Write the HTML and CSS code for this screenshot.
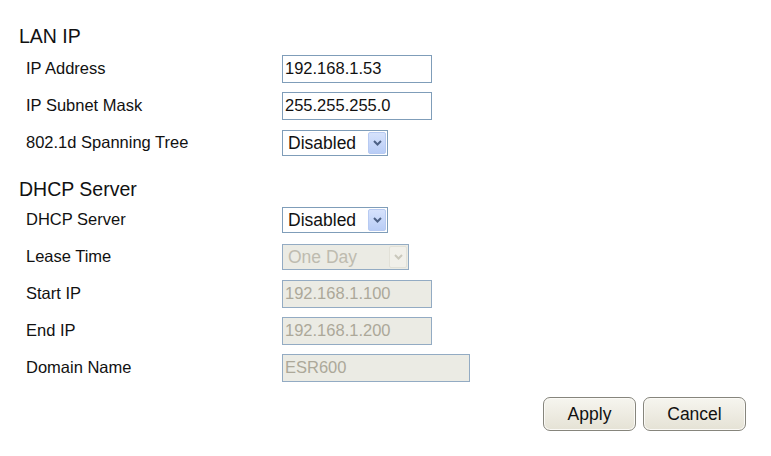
FILE: index.html
```html
<!DOCTYPE html>
<html lang="en">
<head>
  <meta charset="UTF-8">
  <title>LAN Setup</title>
  <link rel="stylesheet" href="styles.css">
</head>
<body>
  <form class="page" id="lanForm">
    <h2 class="section-title">LAN IP</h2>
    <div class="fields">
      <div class="row">
        <label for="ipAddr">IP Address</label>
        <input class="text ip" id="ipAddr" type="text" value="192.168.1.53">
      </div>
      <div class="row">
        <label for="ipMask">IP Subnet Mask</label>
        <input class="text ip" id="ipMask" type="text" value="255.255.255.0">
      </div>
      <div class="row">
        <label for="stp">802.1d Spanning Tree</label>
        <div class="select short">
          <select id="stp">
            <option>Disabled</option>
            <option>Enabled</option>
          </select>
          <span class="arrow"><svg width="9" height="6" viewBox="0 0 9 6"><path d="M1 1 L4.5 4.5 L8 1" fill="none" stroke="currentColor" stroke-width="2"/></svg></span>
        </div>
      </div>
    </div>

    <h2 class="section-title dhcp">DHCP Server</h2>
    <div class="fields dhcp-fields">
      <div class="row">
        <label for="dhcp">DHCP Server</label>
        <div class="select short">
          <select id="dhcp">
            <option>Disabled</option>
            <option>Enabled</option>
          </select>
          <span class="arrow"><svg width="9" height="6" viewBox="0 0 9 6"><path d="M1 1 L4.5 4.5 L8 1" fill="none" stroke="currentColor" stroke-width="2"/></svg></span>
        </div>
      </div>
      <div class="row">
        <label for="lease">Lease Time</label>
        <div class="select wide disabled">
          <select id="lease" disabled>
            <option>One Day</option>
          </select>
          <span class="arrow"><svg width="9" height="6" viewBox="0 0 9 6"><path d="M1 1 L4.5 4.5 L8 1" fill="none" stroke="currentColor" stroke-width="2"/></svg></span>
        </div>
      </div>
      <div class="row">
        <label for="startIp">Start IP</label>
        <input class="text ip" id="startIp" type="text" value="192.168.1.100" disabled>
      </div>
      <div class="row">
        <label for="endIp">End IP</label>
        <input class="text ip" id="endIp" type="text" value="192.168.1.200" disabled>
      </div>
      <div class="row">
        <label for="domain">Domain Name</label>
        <input class="text domain" id="domain" type="text" value="ESR600" disabled>
      </div>
    </div>

    <div class="actions">
      <button type="submit" class="btn apply">Apply</button>
      <button type="button" class="btn cancel">Cancel</button>
    </div>
  </form>
</body>
</html>
```

FILE: styles.css
```css
body {
  margin: 0;
  padding-top: 24px;
  background: white;
  font-family: 'Liberation Sans', Arial, sans-serif;
  color: #111;
}
.section-title {
  margin: 0;
  padding-left: 19px;
  font-size: 19.5px;
  line-height: 24px;
  font-weight: normal;
}
.section-title.dhcp {
  margin-top: 16px;
}
.fields {
  margin-top: 2px;
  padding-left: 26px;
}
.dhcp-fields {
  margin-top: 0;
}
.row {
  display: grid;
  grid-template-columns: 256px auto;
  align-items: center;
  height: 37px;
}
.row label {
  font-size: 16.5px;
}
.text {
  box-sizing: border-box;
  height: 28px;
  margin: 0;
  padding: 0 2px;
  border: 1px solid #7f9db9;
  background: white;
  font-family: 'Liberation Sans', Arial, sans-serif;
  font-size: 16.5px;
  color: #111;
  outline: none;
}
.text.ip {
  width: 150px;
}
.text.domain {
  width: 188px;
}
.text:disabled {
  background: #ebebe4;
  border-color: #93abc3;
  color: #aca899;
}
.select {
  box-sizing: border-box;
  display: flex;
  align-items: center;
  height: 26px;
  border: 1px solid #7f9db9;
  background: white;
  padding: 1px;
}
.select.short {
  width: 106px;
}
.select.wide {
  width: 127px;
}
.select select {
  flex: 1;
  min-width: 0;
  height: 100%;
  margin: 0;
  padding: 0 0 0 4px;
  border: none;
  background: transparent;
  appearance: none;
  -webkit-appearance: none;
  font-family: 'Liberation Sans', Arial, sans-serif;
  font-size: 17.5px;
  color: #111;
  outline: none;
}
.select .arrow {
  box-sizing: border-box;
  display: flex;
  align-items: center;
  justify-content: center;
  width: 18px;
  height: 100%;
  border: 1px solid #b7caf2;
  border-radius: 2px;
  background: linear-gradient(#d6e2fc, #b9cdf6);
  color: #4d6185;
}
.select.disabled {
  background: #ebebe4;
  border-color: #93abc3;
}
.select.disabled select {
  color: #aca899;
}
.select.disabled .arrow {
  border-color: #e2e1d8;
  background: #f1f0ea;
  color: #cac8bc;
}
.actions {
  display: flex;
  justify-content: flex-end;
  gap: 7px;
  padding-right: 25px;
  margin-top: 11px;
}
.btn {
  height: 34px;
  padding: 0;
  border: 1px solid #86857c;
  border-radius: 7px;
  background: linear-gradient(#f6f5ef, #e5e2d5);
  box-shadow: inset 0 0 0 1px #fbfaf6;
  font-family: 'Liberation Sans', Arial, sans-serif;
  font-size: 17.5px;
  color: #111;
  cursor: pointer;
}
.btn.apply {
  width: 93px;
}
.btn.cancel {
  width: 103px;
}
.btn:hover {
  background: #f3f1e8;
}
```
